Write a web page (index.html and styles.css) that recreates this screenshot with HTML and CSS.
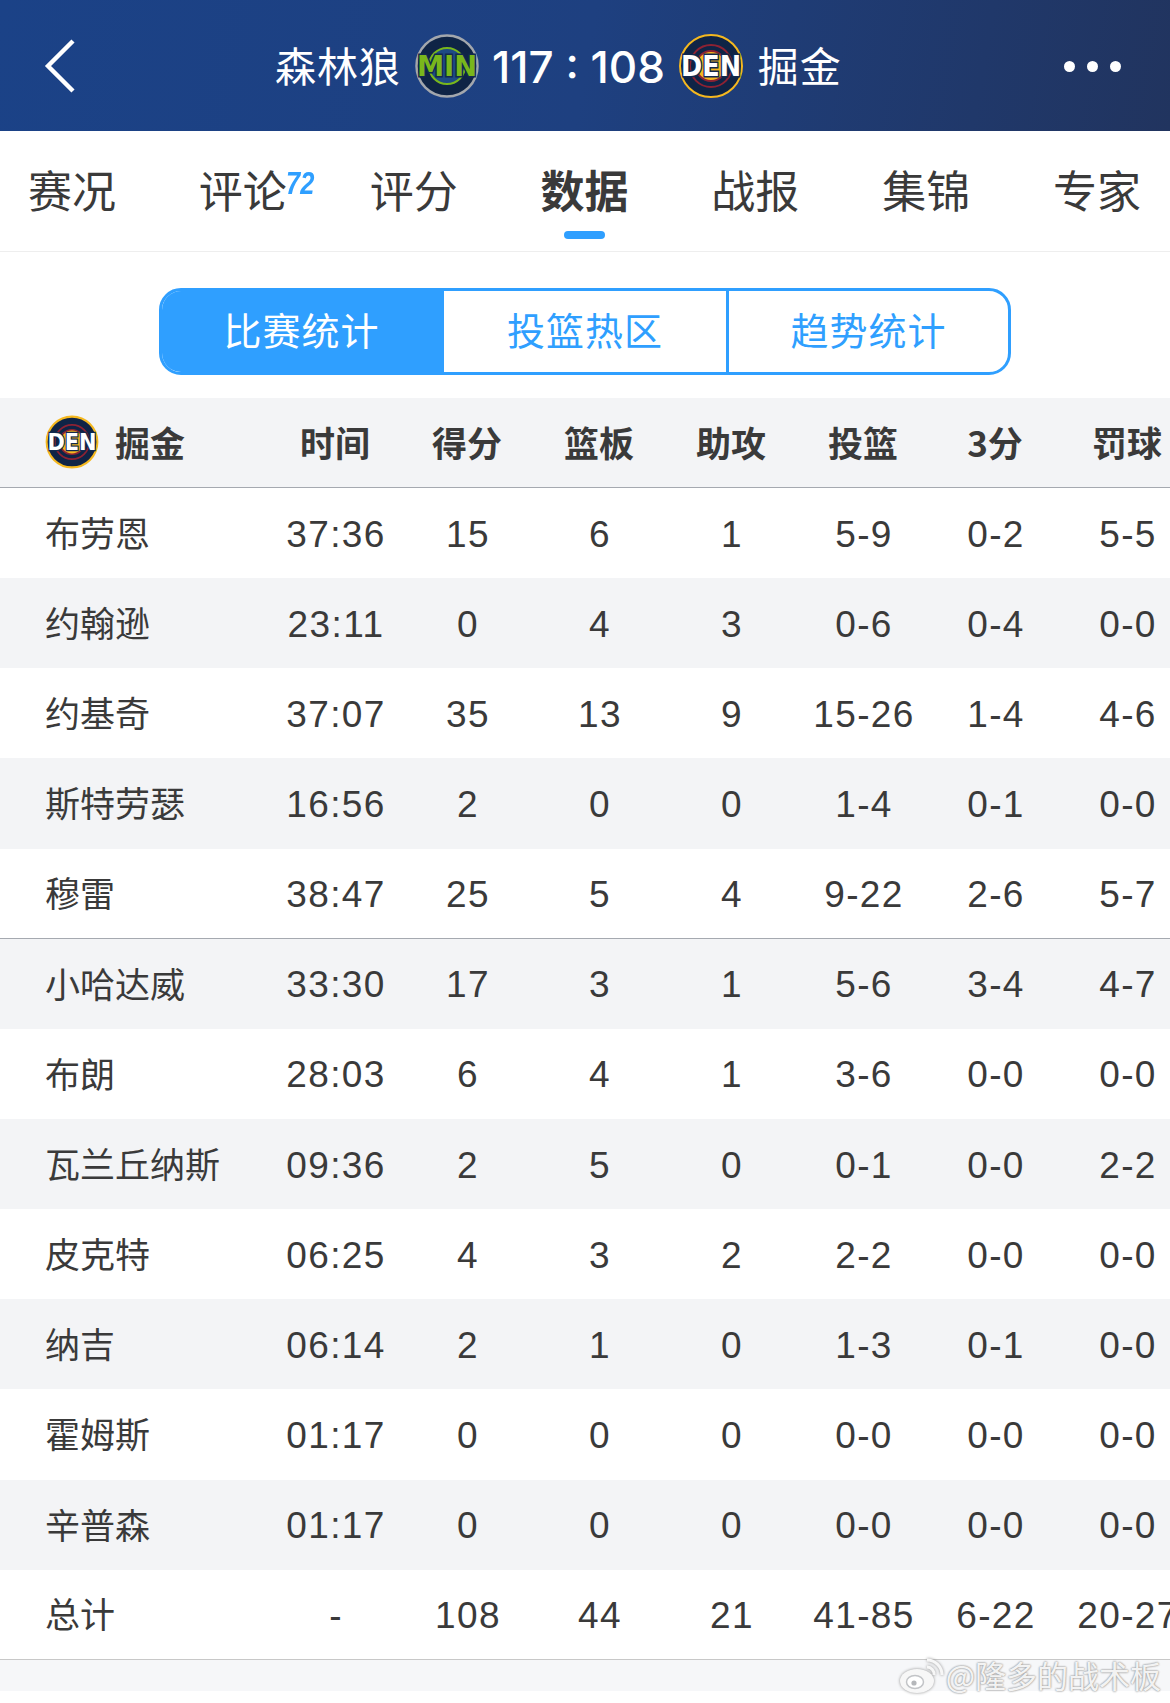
FILE: index.html
```html
<!DOCTYPE html>
<html lang="zh">
<head>
<meta charset="utf-8">
<title>森林狼 117 : 108 掘金</title>
<link rel="stylesheet" href="styles.css">
</head>
<body>
<div class="page">
  <header class="topbar">
    <svg class="back" viewBox="0 0 32 54" width="32" height="54"><path d="M29 2 L4 27 L29 52" fill="none" stroke="#fff" stroke-width="4.4"/></svg>
    <div class="match">
      <span class="team">森林狼</span>
      <svg class="logo" viewBox="0 0 66 66" width="66" height="66">
        <circle cx="33" cy="33" r="30.5" fill="#0f2446" stroke="#a3a7ad" stroke-width="2.5"/>
        <circle cx="33" cy="33" r="18" fill="#1d4a85" stroke="#79b71c" stroke-width="2"/>
        <text class="logo-min" x="33" y="43" text-anchor="middle" textLength="60" lengthAdjust="spacingAndGlyphs">MIN</text>
      </svg>
      <span class="score">117 : 108</span>
      <svg class="logo" viewBox="0 0 66 66" width="66" height="66">
        <circle cx="33" cy="33" r="31" fill="#0f2446" stroke="#f5b81f" stroke-width="2"/>
        <circle cx="33" cy="33" r="21" fill="none" stroke="#8d2233" stroke-width="2"/>
        <circle cx="33" cy="33" r="15" fill="#f5b81f" stroke="#8d2233" stroke-width="2"/>
        <text class="logo-den" x="33" y="43" text-anchor="middle" textLength="60" lengthAdjust="spacingAndGlyphs">DEN</text>
      </svg>
      <span class="team">掘金</span>
    </div>
    <div class="dots"><i></i><i></i><i></i></div>
  </header>

  <nav class="tabs">
    <span class="tab">赛况</span>
    <span class="tab">评论<sup class="count">72</sup></span>
    <span class="tab">评分</span>
    <span class="tab active">数据</span>
    <span class="tab">战报</span>
    <span class="tab">集锦</span>
    <span class="tab">专家</span>
  </nav>

  <div class="segment-wrap">
    <div class="segment">
      <span class="seg on">比赛统计</span>
      <span class="seg">投篮热区</span>
      <span class="seg">趋势统计</span>
    </div>
  </div>

  <section class="stats">
    <div class="row head">
      <span class="name head-team">
        <svg viewBox="0 0 66 66" width="54" height="54">
          <circle cx="33" cy="33" r="31" fill="#0f2446" stroke="#f5b81f" stroke-width="2.5"/>
          <circle cx="33" cy="33" r="21" fill="none" stroke="#8d2233" stroke-width="2"/>
          <circle cx="33" cy="33" r="15" fill="#f5b81f" stroke="#8d2233" stroke-width="2"/>
          <text class="logo-den" x="33" y="43" text-anchor="middle" textLength="60" lengthAdjust="spacingAndGlyphs">DEN</text>
        </svg>
        掘金
      </span>
      <span>时间</span><span>得分</span><span>篮板</span><span>助攻</span><span>投篮</span><span>3分</span><span>罚球</span>
    </div>
    <div class="row"><span class="name">布劳恩</span><span>37:36</span><span>15</span><span>6</span><span>1</span><span>5-9</span><span>0-2</span><span>5-5</span></div>
    <div class="row alt"><span class="name">约翰逊</span><span>23:11</span><span>0</span><span>4</span><span>3</span><span>0-6</span><span>0-4</span><span>0-0</span></div>
    <div class="row"><span class="name">约基奇</span><span>37:07</span><span>35</span><span>13</span><span>9</span><span>15-26</span><span>1-4</span><span>4-6</span></div>
    <div class="row alt"><span class="name">斯特劳瑟</span><span>16:56</span><span>2</span><span>0</span><span>0</span><span>1-4</span><span>0-1</span><span>0-0</span></div>
    <div class="row starter-end"><span class="name">穆雷</span><span>38:47</span><span>25</span><span>5</span><span>4</span><span>9-22</span><span>2-6</span><span>5-7</span></div>
    <div class="row alt"><span class="name">小哈达威</span><span>33:30</span><span>17</span><span>3</span><span>1</span><span>5-6</span><span>3-4</span><span>4-7</span></div>
    <div class="row"><span class="name">布朗</span><span>28:03</span><span>6</span><span>4</span><span>1</span><span>3-6</span><span>0-0</span><span>0-0</span></div>
    <div class="row alt"><span class="name">瓦兰丘纳斯</span><span>09:36</span><span>2</span><span>5</span><span>0</span><span>0-1</span><span>0-0</span><span>2-2</span></div>
    <div class="row"><span class="name">皮克特</span><span>06:25</span><span>4</span><span>3</span><span>2</span><span>2-2</span><span>0-0</span><span>0-0</span></div>
    <div class="row alt"><span class="name">纳吉</span><span>06:14</span><span>2</span><span>1</span><span>0</span><span>1-3</span><span>0-1</span><span>0-0</span></div>
    <div class="row"><span class="name">霍姆斯</span><span>01:17</span><span>0</span><span>0</span><span>0</span><span>0-0</span><span>0-0</span><span>0-0</span></div>
    <div class="row alt"><span class="name">辛普森</span><span>01:17</span><span>0</span><span>0</span><span>0</span><span>0-0</span><span>0-0</span><span>0-0</span></div>
    <div class="row total"><span class="name">总计</span><span>-</span><span>108</span><span>44</span><span>21</span><span>41-85</span><span>6-22</span><span>20-27</span></div>
  </section>
  <div class="foot"></div>

  <div class="watermark">
    <svg class="wb" viewBox="0 0 46 38" width="46" height="38"><ellipse class="wb-body" cx="18" cy="25" rx="17" ry="12"/><ellipse class="wb-eye" cx="16" cy="26" rx="8.5" ry="6.5"/><circle class="wb-pupil" cx="15" cy="27" r="2.6"/><path class="wb-wave" d="M28 11a7 7 0 0 1 7 8M28 4a15 15 0 0 1 15 15"/></svg>
    <span>@隆多的战术板</span>
  </div>
</div>
</body>
</html>
```
FILE: styles.css
```css
* { box-sizing: border-box; }
html, body { margin: 0; padding: 0; background: #fff; }
body {
  font-family: "Liberation Sans", "Noto Sans CJK SC", sans-serif;
  color: #333;
}
.page { position: relative; width: 1170px; height: 1703px; overflow: hidden; }

.topbar {
  height: 131px;
  display: flex;
  align-items: center;
  padding-left: 44px;
  background: linear-gradient(100deg, #1b4287 0%, #1e4080 50%, #21345f 100%);
  color: #fff;
}
.back { display: block; }
.match { display: flex; align-items: center; margin-left: 199px; }
.team { font-size: 41px; letter-spacing: 1px; font-family: "Noto Sans CJK SC", sans-serif; font-weight: 400; padding-bottom: 4px; }
.logo { display: block; margin: 0 14px 0 13px; }
.score { font-family: "Inter", "Liberation Sans", sans-serif; font-size: 44px; font-weight: 500; white-space: nowrap; margin-left: -2px; padding-top: 2px; }
.logo-min { font: 700 29px "DejaVu Sans", sans-serif; fill: #79b71c; stroke: #12294e; stroke-width: 3px; paint-order: stroke; }
.logo-den { font: 700 29px "DejaVu Sans", sans-serif; fill: #fff; stroke: #12294e; stroke-width: 3px; paint-order: stroke; }
.dots { display: flex; gap: 12px; margin-left: auto; margin-right: 49px; padding-top: 2px; }
.dots i { display: block; width: 11px; height: 11px; border-radius: 50%; background: #fff; }

.tabs {
  height: 121px;
  display: flex;
  justify-content: space-between;
  padding: 28px 29px 0 28px;
  border-bottom: 1px solid #eeeeee;
  font-family: "Noto Sans CJK SC", sans-serif;
}
.tab { position: relative; width: 88px; font-size: 44px; line-height: 60px; color: #3a3a3a; white-space: nowrap; font-weight: 400; }
.tab.active { font-weight: 700; }
.tab.active::after {
  content: "";
  position: absolute;
  left: 24px; top: 72px;
  width: 41px; height: 8px;
  border-radius: 4px;
  background: #2f9fff;
}
.count {
  position: absolute;
  left: 87px; top: 8px;
  font: italic 700 31px/34px "Liberation Sans", sans-serif;
  color: #2f9fff;
  transform: scaleX(0.82);
  transform-origin: left center;
}

.segment-wrap { display: flex; justify-content: center; padding: 36px 0 23px; }
.segment {
  display: grid;
  grid-template-columns: repeat(3, 1fr);
  width: 852px;
  height: 87px;
  border: 3px solid #2f9fff;
  border-radius: 22px;
  overflow: hidden;
}
.seg {
  display: flex; align-items: center; justify-content: center;
  font-family: "Noto Sans CJK SC", sans-serif;
  font-size: 38px;
  letter-spacing: 1px;
  padding-bottom: 6px;
  color: #2f9fff;
}
.seg + .seg + .seg { border-left: 3px solid #2f9fff; }
.seg.on { background: #2f9fff; color: #fff; padding-right: 3px; }

.row {
  display: grid;
  grid-template-columns: 269px repeat(7, 132px);
  align-items: center;
  height: 90.15px;
  font-size: 37px;
  letter-spacing: 1.4px;
  color: #3a3a3a;
  white-space: nowrap;
}
.row > span { text-align: center; font-family: "Liberation Sans", "Noto Sans CJK SC", sans-serif; padding: 3px 0 0 2px; }
.row > .name { text-align: left; padding: 0 0 3px 45px; font-size: 35px; letter-spacing: 0; font-family: "Noto Sans CJK SC", sans-serif; }
.alt { background: #f3f4f6; }
.head {
  height: 90px;
  background: #f3f4f6;
  border-bottom: 1.5px solid #a5a9b0;
  font-weight: 700;
}
.row.head > span { font-family: "Noto Sans CJK SC", sans-serif; font-size: 35px; letter-spacing: 0; padding: 0 0 2px; }
.row.head > .head-team { padding-left: 45px; }
.head-team { display: flex; align-items: center; gap: 16px; }
.head-team svg { display: block; }
.starter-end { border-bottom: 1.5px solid #a5a9b0; }
.total { border-bottom: 1px solid #c8c8c8; }
.foot { height: 31px; background: #f6f7f9; }

.watermark {
  position: absolute;
  right: 9px; top: 1652px;
  display: flex; align-items: center; gap: 1px;
  font-family: "Noto Sans CJK SC", sans-serif;
  font-size: 31px;
  color: rgba(255,255,255,.9);
  text-shadow: 0 0 2px #9a9a9a, 0 0 2px #9a9a9a;
}
.wb { display: block; filter: drop-shadow(0 0 1.5px #8f8f8f); }
.wb-body { fill: #f7f7f7; }
.wb-eye { fill: #fff; stroke: #c2c4c7; stroke-width: 1.5; }
.wb-pupil { fill: #b5b7ba; }
.wb-wave { fill: none; stroke: #f7f7f7; stroke-width: 3; }
```
